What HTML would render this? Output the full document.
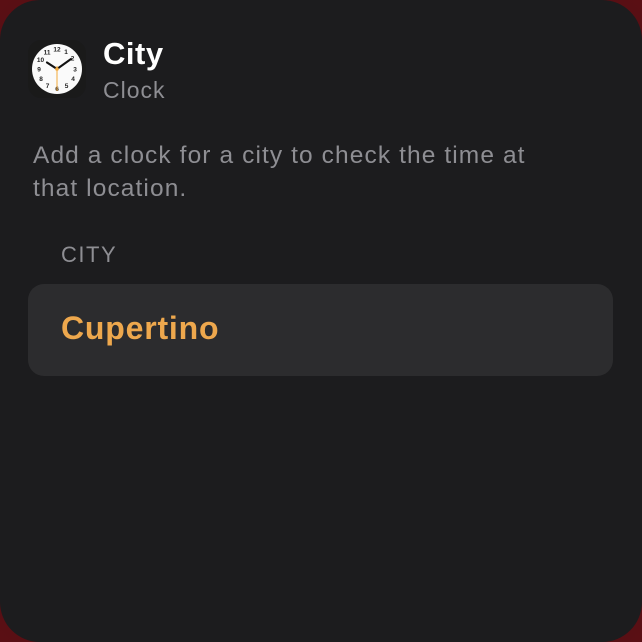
<!DOCTYPE html>
<html><head><style>
html,body{margin:0;padding:0;width:642px;height:642px;overflow:hidden;background:radial-gradient(circle at 50% 50%,#3a0a0e,#5a0f14);font-family:"Liberation Sans",sans-serif}
.card{position:absolute;left:0;top:0;width:642px;height:642px;background:#1c1c1e;border-radius:40px;}
.t{position:absolute;white-space:nowrap}
</style></head><body>
<div class="card"></div>
<svg style="position:absolute;left:28px;top:40px" width="58" height="58" viewBox="0 0 58 58">
<rect x="0" y="0" width="58" height="58" rx="13" fill="#1a1a1a"/>
<circle cx="29" cy="29" r="25" fill="#fafafa"/>
<g font-family="Liberation Sans" font-size="6.5" font-weight="bold" fill="#222" text-anchor="middle">
<text x="29" y="11.5">12</text><text x="38" y="14">1</text><text x="44.5" y="20.5">2</text><text x="47" y="31.5">3</text><text x="45" y="41">4</text><text x="38.5" y="48">5</text><text x="29" y="51">6</text><text x="19.5" y="48">7</text><text x="13" y="41">8</text><text x="11" y="31.5">9</text><text x="12.5" y="22">10</text><text x="19" y="14.5">11</text>
</g>
<line x1="29" y1="29" x2="19" y2="22.5" stroke="#111" stroke-width="2.2" stroke-linecap="round"/>
<line x1="29" y1="29" x2="43" y2="19" stroke="#111" stroke-width="2" stroke-linecap="round"/>
<line x1="29" y1="26" x2="29" y2="51" stroke="#f2a93b" stroke-width="1"/>
<circle cx="29" cy="29" r="1.8" fill="#f2a93b"/>
</svg>
<div class="t" style="left:103px;top:36px;font-size:31px;font-weight:bold;color:#fff;letter-spacing:0.5px">City</div>
<div class="t" style="left:103px;top:77px;font-size:23px;color:#8e8e93;letter-spacing:1px">Clock</div>
<div class="t" style="left:33px;top:139px;font-size:24.5px;line-height:33px;letter-spacing:1.1px;color:#8e8e93;white-space:normal;width:515px">Add a clock for a city to check the time at that location.</div>
<div class="t" style="left:61px;top:242px;font-size:22px;color:#8e8e93;letter-spacing:1.5px">CITY</div>
<div style="position:absolute;left:28px;top:284px;width:585px;height:92px;background:#2c2c2e;border-radius:16px"></div>
<div class="t" style="left:61px;top:310px;font-size:32px;font-weight:bold;color:#eea84d;letter-spacing:0.8px">Cupertino</div>
</body></html>
